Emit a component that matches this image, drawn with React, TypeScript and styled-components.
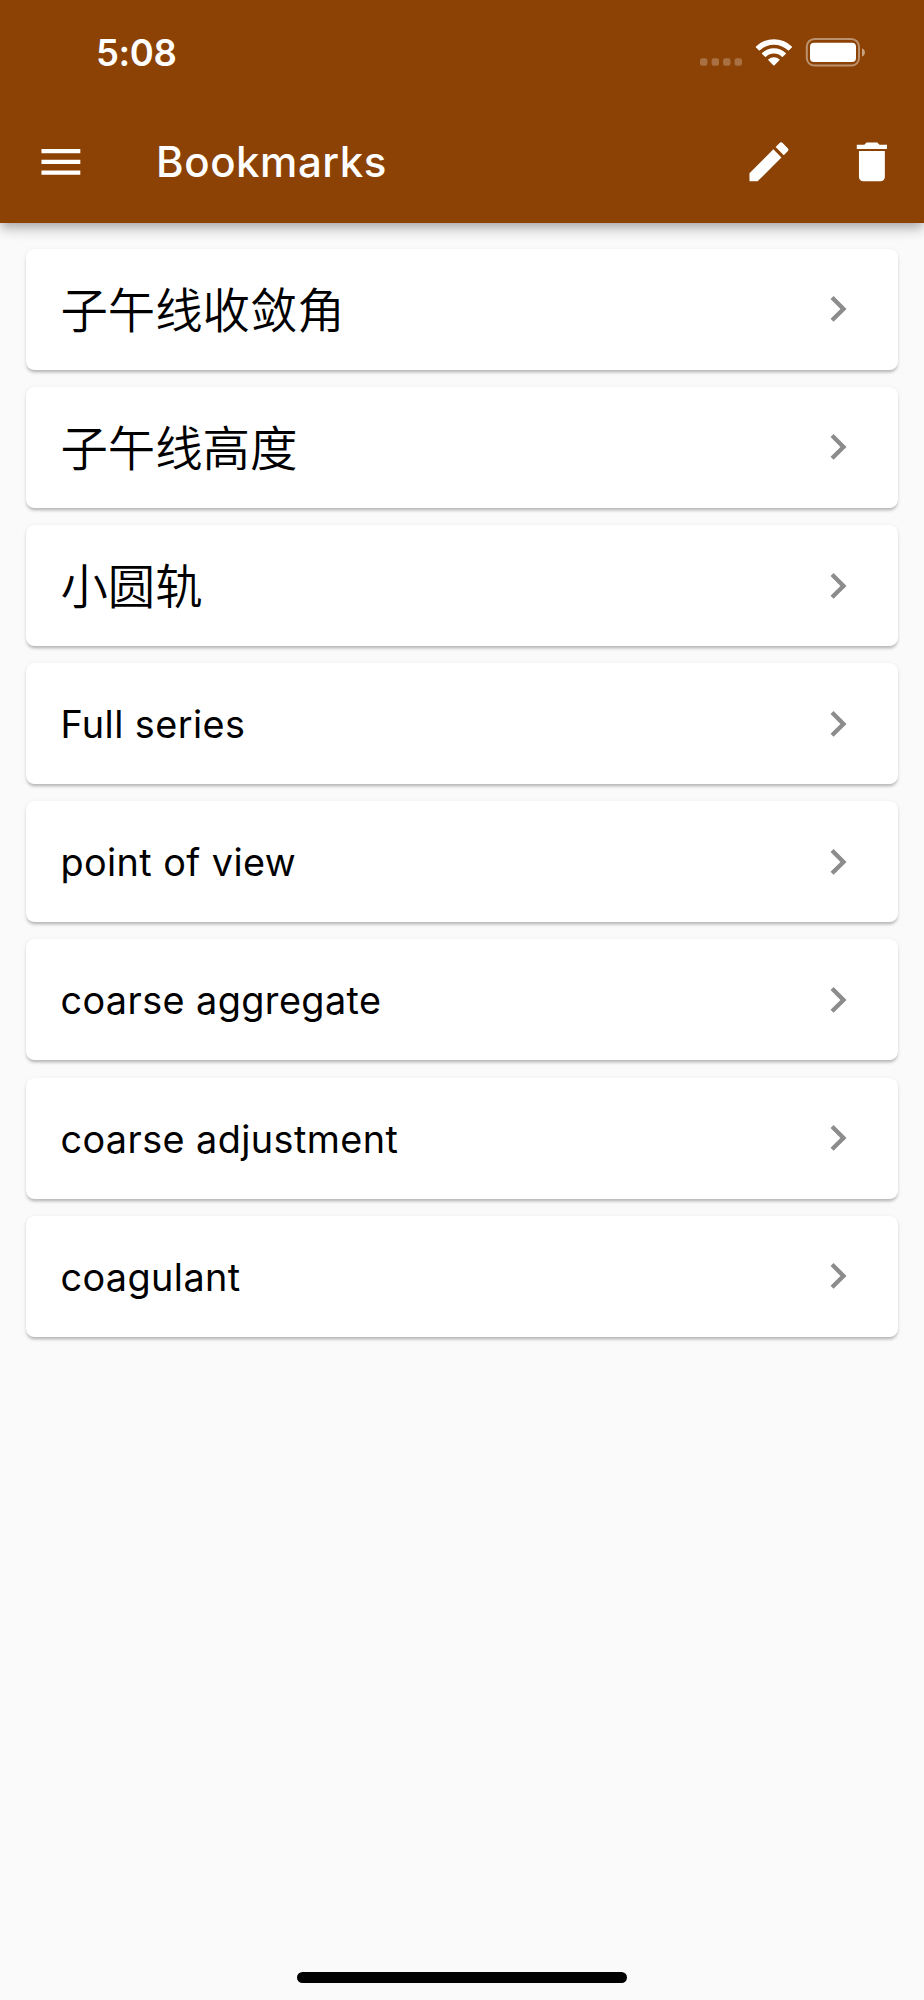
import React from 'react';
import styled, { createGlobalStyle } from 'styled-components';

const GlobalStyle = createGlobalStyle`
  * { box-sizing: border-box; }
  body {
    margin: 0;
    background: #fafafa;
    font-family: Inter, "Noto Sans CJK SC", sans-serif;
  }
`;

const Screen = styled.div`
  width: 924px;
  height: 2000px;
  display: flex;
  flex-direction: column;
  overflow: hidden;
  background: #fafafa;
`;

const Header = styled.header`
  height: 222.8px;
  flex: none;
  color: #fff;
  background: #8c4204;
  box-shadow: 0 4.3px 8.6px -2.1px rgba(0, 0, 0, 0.2), 0 8.6px 10.8px 0 rgba(0, 0, 0, 0.14),
    0 2.1px 21.6px 0 rgba(0, 0, 0, 0.06);
`;

const StatusBar = styled.div`
  height: 101.5px;
  display: flex;
  justify-content: space-between;
  padding: 34px 59px 0 96px;
`;

const Clock = styled.time`
  height: 38px;
  line-height: 38px;
  font-size: 36.5px;
  font-weight: 570;
  letter-spacing: -0.4px;
`;

const StatusIcons = styled.svg`
  width: 170px;
  height: 36px;
  display: block;
`;

const AppBar = styled.div`
  height: 120.9px;
  display: flex;
  align-items: center;
  padding: 0 26px 0 34.5px;
`;

const Icon = styled.svg`
  width: 51.8px;
  height: 51.8px;
  flex: none;
  display: block;
  fill: currentColor;
`;

const Title = styled.h1`
  flex: 1;
  margin: 0 0 0 69.8px;
  font-size: 42px;
  line-height: 52px;
  font-weight: 450;
  letter-spacing: 0.55px;
`;

const Actions = styled.div`
  display: flex;
  gap: 51.8px;
`;

const List = styled.main`
  flex: 1;
  display: flex;
  flex-direction: column;
  gap: 17.27px;
  padding: 25.9px 25.9px 0;
`;

const Card = styled.div`
  height: 120.9px;
  flex: none;
  display: flex;
  align-items: center;
  justify-content: space-between;
  padding: 0 34.5px;
  border-radius: 8.6px;
  background: #fff;
  color: #8c8c8c;
  box-shadow: 0 2.2px 2.2px -1px rgba(0, 0, 0, 0.13), 0 2.2px 3px 0 rgba(0, 0, 0, 0.09),
    0 1.5px 5px 0 rgba(0, 0, 0, 0.07);
`;

const Term = styled.span<{ $cjk?: boolean }>`
  color: #000;
  font-family: ${(p) => (p.$cjk ? '"Noto Sans CJK SC", sans-serif' : 'Inter, sans-serif')};
  font-size: ${(p) => (p.$cjk ? '47.4px' : '37.8px')};
  font-weight: ${(p) => (p.$cjk ? 350 : 380)};
  line-height: 60px;
  letter-spacing: ${(p) => (p.$cjk ? '0' : '0.42px')};
  padding: ${(p) => (p.$cjk ? '0 0 3px' : '1px 0 0')};
  white-space: nowrap;
`;

const Footer = styled.footer`
  display: flex;
  justify-content: center;
  padding-bottom: 17px;
`;

const HomeIndicator = styled.div`
  width: 330.5px;
  height: 11.4px;
  border-radius: 6px;
  background: #000;
`;

const terms: { text: string; cjk?: boolean }[] = [
  { text: '子午线收敛角', cjk: true },
  { text: '子午线高度', cjk: true },
  { text: '小圆轨', cjk: true },
  { text: 'Full series' },
  { text: 'point of view' },
  { text: 'coarse aggregate' },
  { text: 'coarse adjustment' },
  { text: 'coagulant' },
];

export default function App() {
  return (
    <Screen>
      <GlobalStyle />
      <Header>
        <StatusBar>
          <Clock>5:08</Clock>
          <StatusIcons viewBox="695 34 170 36">
            <g fill="#fff" fillOpacity=".25">
              <rect x="700" y="58.2" width="7.4" height="7.6" rx="2.2" />
              <rect x="711.6" y="58.2" width="7.4" height="7.6" rx="2.2" />
              <rect x="723.1" y="58.2" width="7.4" height="7.6" rx="2.2" />
              <rect x="734.6" y="58.2" width="7.4" height="7.6" rx="2.2" />
            </g>
            <g fill="#fff">
              <path d="M756 46.4a25.7 25.7 0 0 1 35.8 0q.5.6 0 1.1l-2.8 2.8q-.5.5-1.1 0a20.3 20.3 0 0 0-28 0q-.6.5-1.1 0l-2.8-2.8q-.5-.5 0-1.1z" />
              <path d="M762.1 52.9a17 17 0 0 1 23.6 0q.5.5 0 1l-2.9 2.8q-.5.5-1 0a11.5 11.5 0 0 0-15.8 0q-.5.5-1 0l-2.9-2.8q-.5-.5 0-1z" />
              <path d="M768.4 59.3a8.4 8.4 0 0 1 11 0q.5.5 0 1l-4.9 5q-.6.6-1.2 0l-4.9-5q-.5-.5 0-1z" />
              <rect x="810" y="42.8" width="46" height="19.2" rx="4" />
              <path d="M862 48.2c1.7.7 2.9 2.2 2.9 4.2s-1.2 3.5-2.9 4.2z" fillOpacity=".5" />
            </g>
            <rect x="806.8" y="39" width="52.2" height="26.6" rx="7.6" fill="none" stroke="#fff" strokeOpacity=".42" strokeWidth="2" />
          </StatusIcons>
        </StatusBar>
        <AppBar>
          <Icon viewBox="0 0 24 24">
            <path d="M3 18h18v-2H3v2zm0-5h18v-2H3v2zm0-7v2h18V6H3z" />
          </Icon>
          <Title>Bookmarks</Title>
          <Actions>
            <Icon viewBox="0 0 24 24">
              <path d="M3 17.25V21h3.75L17.81 9.94l-3.75-3.75L3 17.25zM20.71 7.04a1 1 0 0 0 0-1.41l-2.34-2.34a1 1 0 0 0-1.41 0l-1.83 1.83 3.75 3.75 1.83-1.83z" />
            </Icon>
            <Icon viewBox="0 0 24 24">
              <path d="M6 19c0 1.1.9 2 2 2h8c1.1 0 2-.9 2-2V7H6v12zM19 4h-3.5l-1-1h-5l-1 1H5v2h14V4z" />
            </Icon>
          </Actions>
        </AppBar>
      </Header>
      <List>
        {terms.map(({ text, cjk }) => (
          <Card key={text}>
            <Term $cjk={cjk}>{text}</Term>
            <Icon viewBox="0 0 24 24">
              <path d="M10 6L8.59 7.41 13.17 12l-4.58 4.59L10 18l6-6z" />
            </Icon>
          </Card>
        ))}
      </List>
      <Footer>
        <HomeIndicator />
      </Footer>
    </Screen>
  );
}
